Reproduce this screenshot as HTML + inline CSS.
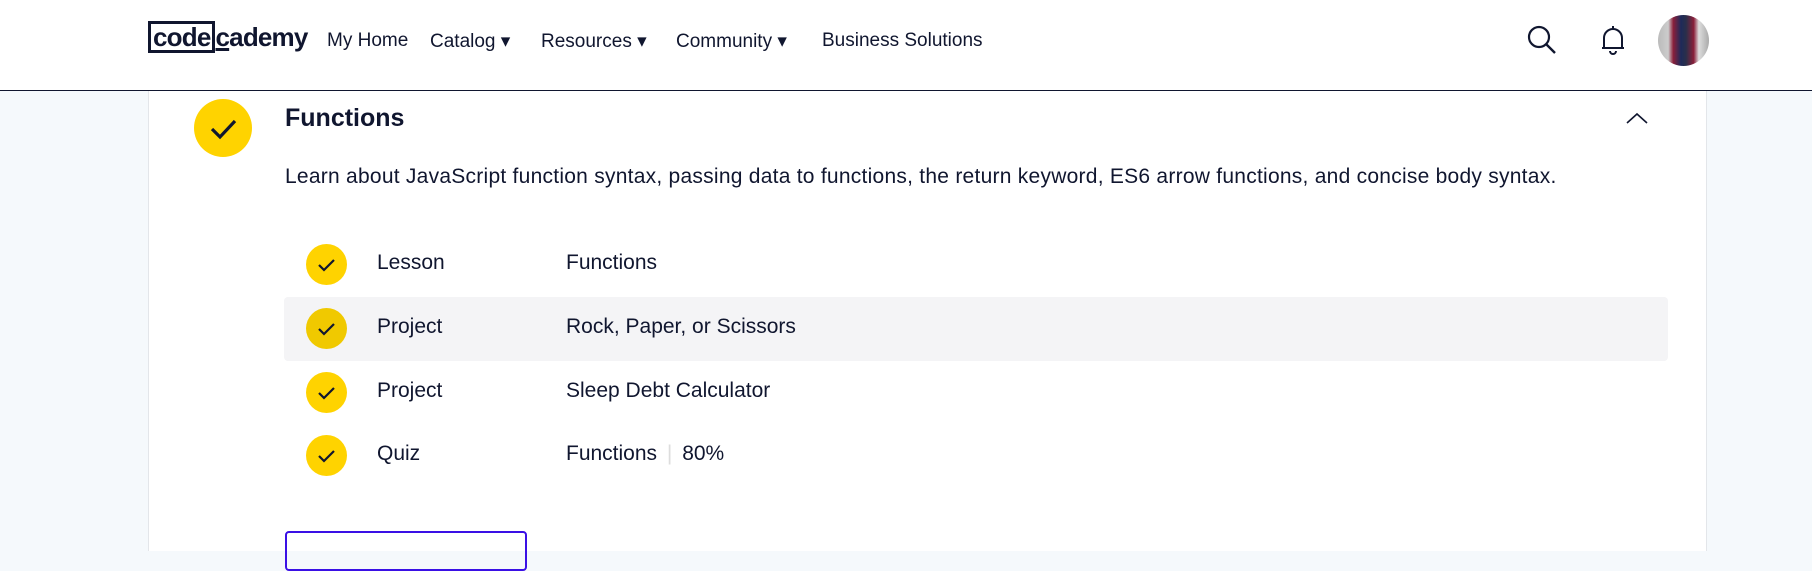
<!DOCTYPE html>
<html><head><style>
*{margin:0;padding:0;box-sizing:border-box}
body{width:1812px;height:535px;overflow:hidden;background:#f5f9fc;font-family:"Liberation Sans",sans-serif;color:#10162f;position:relative}
.hdr{position:absolute;left:0;top:0;width:1812px;height:91px;background:#fff;border-bottom:1px solid #10162f}
.abs{position:absolute}
.nav{position:absolute;top:30px;font-size:19px;white-space:nowrap}
.card{position:absolute;left:148px;top:91px;width:1559px;height:460px;background:#fff;border-left:1px solid #e3e6ea;border-right:1px solid #e3e6ea}
.chk{position:absolute;border-radius:50%;background:#ffd300}
.row{position:absolute;font-size:21px;white-space:nowrap}
</style></head><body>
<div class="hdr">
 <div class="abs" style="left:148px;top:21px;font-size:26px;font-weight:bold;letter-spacing:-0.8px;white-space:nowrap">
  <span style="border:3px solid #10162f;padding:0 2px;display:inline-block;line-height:26px">code</span><span style="text-decoration:underline;text-decoration-thickness:3px">c</span>ademy</div>
 <div class="nav" style="left:327px">My Home</div>
 <div class="nav" style="left:430px">Catalog ▾</div>
 <div class="nav" style="left:541px">Resources ▾</div>
 <div class="nav" style="left:676px">Community ▾</div>
 <div class="nav" style="left:822px">Business Solutions</div>
 <svg class="abs" style="left:1526px;top:24px" width="32" height="32" viewBox="0 0 32 32"><circle cx="13" cy="13" r="10" fill="none" stroke="#10162f" stroke-width="2.2"/><path d="M20 20 L29 29" stroke="#10162f" stroke-width="2.4"/></svg>
 <svg class="abs" style="left:1599px;top:24px" width="28" height="32" viewBox="0 0 28 32"><path d="M5 24 V14 A9 9 0 0 1 23 14 V24 Z M3 24 H25 M14 2 V5 M11 27 A3 3 0 0 0 17 27" fill="none" stroke="#10162f" stroke-width="2"/></svg>
 <div class="abs" style="left:1658px;top:15px;width:51px;height:51px;border-radius:50%;background:linear-gradient(90deg,#bbb 0,#ccc 20%,#8a1f3a 30%,#1e2a5a 45%,#2a2f4a 55%,#8a1f3a 70%,#ddd 80%,#aaa 100%)"></div>
</div>
<div class="card">
 <div class="chk" style="left:45px;top:8px;width:58px;height:58px"></div>
 <svg class="abs" style="left:45px;top:8px" width="58" height="58"><path d="M18 30 L26 38 L41 22" fill="none" stroke="#10162f" stroke-width="3.2"/></svg>
 <div class="abs" style="left:136px;top:13px;font-size:25px;font-weight:bold">Functions</div>
 <svg class="abs" style="left:1476px;top:20px" width="24" height="14"><path d="M2 12 L12 3 L22 12" fill="none" stroke="#10162f" stroke-width="1.6"/></svg>
 <div class="abs" style="left:136px;top:74px;font-size:21px;white-space:nowrap;letter-spacing:0.25px">Learn about JavaScript function syntax, passing data to functions, the return keyword, ES6 arrow functions, and concise body syntax.</div>
 <div class="abs" style="left:135px;top:206px;width:1384px;height:64px;background:#f4f4f6;border-radius:4px"></div>
 <div class="chk" style="left:157px;top:153px;width:41px;height:41px"></div>
 <div class="chk" style="left:157px;top:217px;width:41px;height:41px;background:#f0c900"></div>
 <div class="chk" style="left:157px;top:281px;width:41px;height:41px"></div>
 <div class="chk" style="left:157px;top:344px;width:41px;height:41px"></div>
 <svg class="abs" style="left:157px;top:153px" width="41" height="260">
  <g fill="none" stroke="#10162f" stroke-width="2.2"><path d="M13 21 L18 26 L28 16"/><path d="M13 85 L18 90 L28 80"/><path d="M13 149 L18 154 L28 144"/><path d="M13 212 L18 217 L28 207"/></g></svg>
 <div class="row" style="left:228px;top:160px">Lesson</div><div class="row" style="left:417px;top:160px">Functions</div>
 <div class="row" style="left:228px;top:224px">Project</div><div class="row" style="left:417px;top:224px">Rock, Paper, or Scissors</div>
 <div class="row" style="left:228px;top:288px">Project</div><div class="row" style="left:417px;top:288px">Sleep Debt Calculator</div>
 <div class="row" style="left:228px;top:351px">Quiz</div><div class="row" style="left:417px;top:351px">Functions <span style="color:#ddd;margin:0 4px">|</span> 80%</div>
 <div class="abs" style="left:136px;top:440px;width:242px;height:40px;border:2px solid #3a10e5;border-radius:4px"></div>
</div>
</body></html>
